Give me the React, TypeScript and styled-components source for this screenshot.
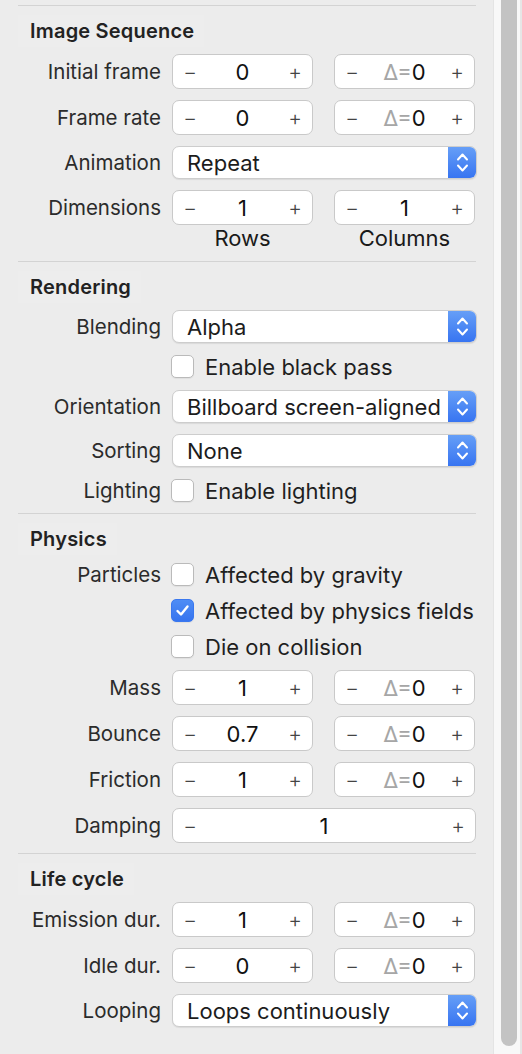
import React from "react";
import styled, { createGlobalStyle } from "styled-components";

const Global = createGlobalStyle`
  html, body { margin: 0; padding: 0; background: #ececec; }
  * { box-sizing: border-box; }
  body { font-family: Inter, "Noto Sans", "Liberation Sans", sans-serif; -webkit-font-smoothing: antialiased; }
`;

const Page = styled.div`
  display: flex;
  width: 522px;
  height: 1054px;
  overflow: hidden;
  background: #ececec;
`;

const Content = styled.div`
  flex: 1;
  padding: 5px 17px 0 18px;
`;

const Section = styled.section`
  border-top: 1px solid #d3d3d3;
  padding-bottom: 10px;
`;

const Header = styled.div`
  height: 48px;
  display: flex;
  align-items: center;
  padding-top: 2px;
`;

const Title = styled.h3`
  margin: 0;
  padding: 4px 10px 4px 12px;
  font-size: 20px;
  font-weight: 600;
  color: #222;
  background: #ededed;
  letter-spacing: 0.2px;
`;

const Grid = styled.div`
  display: grid;
  grid-template-columns: 143px 1fr;
  column-gap: 11px;
  row-gap: 11px;
  align-items: center;
`;

const Label = styled.div<{ $top?: boolean }>`
  text-align: right;
  font-size: 20.5px;
  color: #2b2b2b;
  white-space: nowrap;
  align-self: ${(p) => (p.$top ? "start" : "center")};
  line-height: ${(p) => (p.$top ? "35px" : "normal")};
`;

const Pair = styled.div`
  display: grid;
  grid-template-columns: 141px 141px;
  column-gap: 21px;
`;

const StepBox = styled.div`
  height: 35px;
  background: #fff;
  border: 1px solid #c9c9c9;
  border-radius: 7px;
  display: grid;
  grid-template-columns: 34px 1fr 34px;
  align-items: center;
  font-size: 22px;
`;

const StepSign = styled.span`
  text-align: center;
  color: #444;
  font-size: 21px;
  font-weight: 300;
  line-height: 1;
`;

const StepValue = styled.span`
  text-align: center;
  color: #111;
`;

const Delta = styled.span`
  color: #a6a6a6;
`;

const Captions = styled.div`
  display: grid;
  grid-template-columns: 141px 141px;
  column-gap: 21px;
  height: 26px;
  align-items: center;
  font-size: 22px;
  color: #1a1a1a;
  text-align: center;
`;

const SelectBox = styled.div`
  height: 33px;
  margin-right: -1px;
  background: #fff;
  border: 1px solid #cdcdcd;
  border-radius: 7px;
  box-shadow: 0 1px 1px rgba(0, 0, 0, 0.08);
  display: flex;
  align-items: center;
  overflow: hidden;
`;

const SelectText = styled.span`
  flex: 1;
  padding-left: 14px;
  font-size: 22px;
  color: #1c1c1c;
  white-space: nowrap;
`;

const SelectArrows = styled.span`
  width: 29px;
  align-self: stretch;
  margin: -1px -1px -1px 0;
  background: linear-gradient(#67a0f7, #3673f1);
  display: flex;
  align-items: center;
  justify-content: center;
`;

const CheckRow = styled.label`
  height: 25px;
  display: flex;
  align-items: center;
  gap: 11px;
  margin-left: -1px;
  font-size: 22px;
  color: #1f1f1f;
  white-space: nowrap;
`;

const Box = styled.span<{ $on?: boolean }>`
  flex: none;
  width: 23px;
  height: 23px;
  border-radius: 5px;
  border: 1px solid ${(p) => (p.$on ? "#3a78ef" : "#bababa")};
  background: ${(p) => (p.$on ? "linear-gradient(#4f8df5, #3674ef)" : "#fff")};
  box-shadow: 0 1px 1px rgba(0, 0, 0, 0.06);
  display: flex;
  align-items: center;
  justify-content: center;
`;

const ScrollTrack = styled.div`
  width: 29px;
  height: 100%;
  background: #f8f8f8;
  border-left: 1px solid #e4e4e4;
  padding: 0 6px 0 7px;
  position: relative;
`;

const Thumb = styled.div`
  width: 16px;
  height: 1046px;
  background: #c3c3c3;
  border-radius: 0 0 8px 8px;
`;

const TrackEdge = styled.div`
  position: absolute;
  right: 0;
  top: 0;
  bottom: 0;
  width: 2px;
  background: #e6e6e6;
`;

function Stepper({ value, delta }: { value: string; delta?: boolean }) {
  return (
    <StepBox>
      <StepSign>−</StepSign>
      <StepValue>
        {delta && <Delta>Δ=</Delta>}
        {value}
      </StepValue>
      <StepSign>+</StepSign>
    </StepBox>
  );
}

function StepperPair({ value }: { value: string }) {
  return (
    <Pair>
      <Stepper value={value} />
      <Stepper value="0" delta />
    </Pair>
  );
}

function Select({ value }: { value: string }) {
  return (
    <SelectBox>
      <SelectText>{value}</SelectText>
      <SelectArrows>
        <svg width="29" height="34" viewBox="0 0 29 34" fill="none">
          <path d="M10 13.5 L14.5 8.5 L19 13.5" stroke="#fff" strokeWidth="2" strokeLinecap="round" strokeLinejoin="round" />
          <path d="M10 19.5 L14.5 24.5 L19 19.5" stroke="#fff" strokeWidth="2" strokeLinecap="round" strokeLinejoin="round" />
        </svg>
      </SelectArrows>
    </SelectBox>
  );
}

function Check({ label, on }: { label: string; on?: boolean }) {
  return (
    <CheckRow>
      <Box $on={on}>
        {on && (
          <svg width="17" height="17" viewBox="0 0 17 17" fill="none">
            <path d="M3.5 9 L7 12.5 L13.5 4.5" stroke="#fff" strokeWidth="2.4" strokeLinecap="round" strokeLinejoin="round" />
          </svg>
        )}
      </Box>
      {label}
    </CheckRow>
  );
}

const Empty = styled.div``;

export default function App() {
  return (
    <>
      <Global />
      <Page>
        <Content>
          <Section>
            <Header>
              <Title>Image Sequence</Title>
            </Header>
            <Grid>
              <Label>Initial frame</Label>
              <StepperPair value="0" />
              <Label>Frame rate</Label>
              <StepperPair value="0" />
              <Label>Animation</Label>
              <Select value="Repeat" />
              <Label $top>Dimensions</Label>
              <div>
                <Pair>
                  <Stepper value="1" />
                  <Stepper value="1" />
                </Pair>
                <Captions>
                  <span>Rows</span>
                  <span>Columns</span>
                </Captions>
              </div>
            </Grid>
          </Section>

          <Section>
            <Header>
              <Title>Rendering</Title>
            </Header>
            <Grid>
              <Label>Blending</Label>
              <Select value="Alpha" />
              <Empty />
              <Check label="Enable black pass" />
              <Label>Orientation</Label>
              <Select value="Billboard screen-aligned" />
              <Label>Sorting</Label>
              <Select value="None" />
              <Label>Lighting</Label>
              <Check label="Enable lighting" />
            </Grid>
          </Section>

          <Section>
            <Header>
              <Title>Physics</Title>
            </Header>
            <Grid>
              <Label>Particles</Label>
              <Check label="Affected by gravity" />
              <Empty />
              <Check label="Affected by physics fields" on />
              <Empty />
              <Check label="Die on collision" />
              <Label>Mass</Label>
              <StepperPair value="1" />
              <Label>Bounce</Label>
              <StepperPair value="0.7" />
              <Label>Friction</Label>
              <StepperPair value="1" />
              <Label>Damping</Label>
              <Stepper value="1" />
            </Grid>
          </Section>

          <Section>
            <Header>
              <Title>Life cycle</Title>
            </Header>
            <Grid>
              <Label>Emission dur.</Label>
              <StepperPair value="1" />
              <Label>Idle dur.</Label>
              <StepperPair value="0" />
              <Label>Looping</Label>
              <Select value="Loops continuously" />
            </Grid>
          </Section>
        </Content>
        <ScrollTrack>
          <Thumb />
          <TrackEdge />
        </ScrollTrack>
      </Page>
    </>
  );
}
